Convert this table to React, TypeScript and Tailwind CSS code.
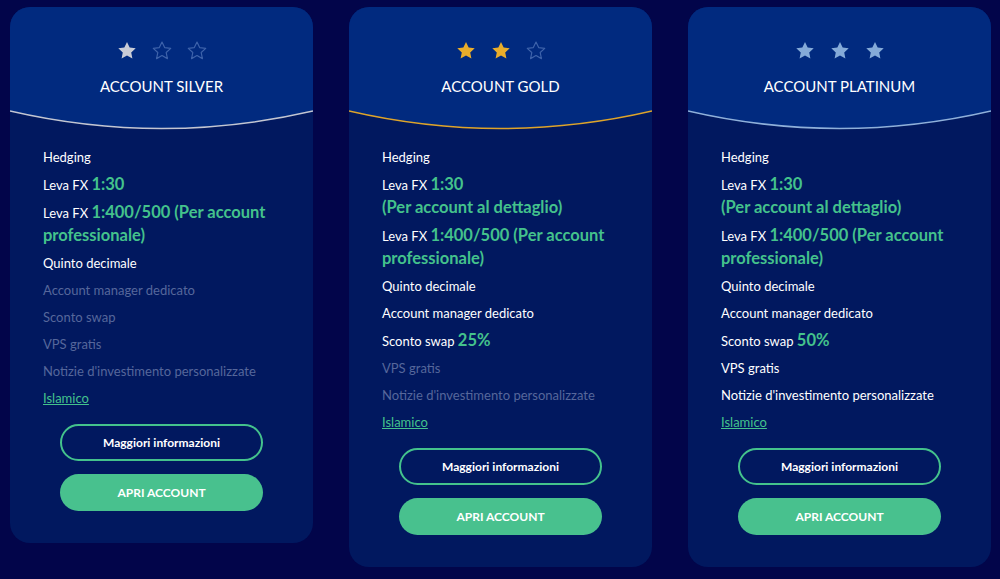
import React from "react";

type Row = { label?: string; value?: string; value2?: string; muted?: boolean; link?: boolean };

interface Plan {
  name: string;
  stars: number;
  starColor: string;
  lineColor: string;
  rows: Row[];
}

const plans: Plan[] = [
  {
    name: "ACCOUNT SILVER",
    stars: 1,
    starColor: "#c9ccd6",
    lineColor: "#c3c6d2",
    rows: [
      { label: "Hedging" },
      { label: "Leva FX", value: "1:30" },
      { label: "Leva FX", value: "1:400/500 (Per account professionale)" },
      { label: "Quinto decimale" },
      { label: "Account manager dedicato", muted: true },
      { label: "Sconto swap", muted: true },
      { label: "VPS gratis", muted: true },
      { label: "Notizie d'investimento personalizzate", muted: true },
      { label: "Islamico", link: true },
    ],
  },
  {
    name: "ACCOUNT GOLD",
    stars: 2,
    starColor: "#e9ad2b",
    lineColor: "#dea42a",
    rows: [
      { label: "Hedging" },
      { label: "Leva FX", value: "1:30", value2: "(Per account al dettaglio)" },
      { label: "Leva FX", value: "1:400/500 (Per account professionale)" },
      { label: "Quinto decimale" },
      { label: "Account manager dedicato" },
      { label: "Sconto swap", value: "25%" },
      { label: "VPS gratis", muted: true },
      { label: "Notizie d'investimento personalizzate", muted: true },
      { label: "Islamico", link: true },
    ],
  },
  {
    name: "ACCOUNT PLATINUM",
    stars: 3,
    starColor: "#84aad8",
    lineColor: "#8fb0da",
    rows: [
      { label: "Hedging" },
      { label: "Leva FX", value: "1:30", value2: "(Per account al dettaglio)" },
      { label: "Leva FX", value: "1:400/500 (Per account professionale)" },
      { label: "Quinto decimale" },
      { label: "Account manager dedicato" },
      { label: "Sconto swap", value: "50%" },
      { label: "VPS gratis" },
      { label: "Notizie d'investimento personalizzate" },
      { label: "Islamico", link: true },
    ],
  },
];

const STAR = "M12 2.2l2.9 6.1 6.6.8-4.9 4.6 1.3 6.6L12 17l-5.9 3.3 1.3-6.6-4.9-4.6 6.6-.8L12 2.2z";

function Star({ filled, color }: { filled: boolean; color: string }) {
  return (
    <svg width="22" height="22" viewBox="0 0 24 24">
      {filled ? (
        <path d={STAR} fill={color} />
      ) : (
        <path d={STAR} fill="none" stroke="#3d62aa" strokeWidth="1.3" strokeLinejoin="round" />
      )}
    </svg>
  );
}

function PlanCard({ plan }: { plan: Plan }) {
  return (
    <div className="w-[303px] shrink-0 overflow-hidden rounded-[20px] bg-[#01185f]">
      <div className="relative h-[128px]">
        <svg className="absolute inset-0" width="303" height="128" viewBox="0 0 303 128">
          <path d="M0 0 H303 V104 Q151.5 139 0 104 Z" fill="#012a7f" />
          <path d="M0 104 Q151.5 139 303 104" fill="none" stroke={plan.lineColor} strokeWidth="1.6" />
        </svg>
        <div className="relative flex flex-col items-center pt-[33px]">
          <div className="flex gap-[13px]">
            {[0, 1, 2].map((i) => (
              <Star key={i} filled={i < plan.stars} color={plan.starColor} />
            ))}
          </div>
          <div className="mt-[14px] text-[15px] leading-[20px] text-white">{plan.name}</div>
        </div>
      </div>

      <div className="px-[33px] pt-[11px] pb-[32px]">
        <ul>
          {plan.rows.map((r, i) => (
            <li
              key={i}
              className={
                "mb-[5px] text-[13px] leading-[22px] " +
                (r.link ? "text-[#44c28c] underline" : r.muted ? "text-[#56679b]" : "text-white")
              }
            >
              {r.label}
              {r.value && (
                <>
                  {" "}
                  <span className="text-[16.5px] leading-[22px] font-bold text-[#44c28c]">{r.value}</span>
                </>
              )}
              {r.value2 && (
                <>
                  <br />
                  <span className="text-[16.5px] leading-[22px] font-bold text-[#44c28c]">{r.value2}</span>
                </>
              )}
            </li>
          ))}
        </ul>

        <div className="mt-[15px] flex flex-col items-center gap-[13px]">
          <button className="h-[37px] w-[203px] rounded-full border-2 border-[#44c28c] text-[12px] font-bold text-white">
            Maggiori informazioni
          </button>
          <button className="h-[37px] w-[203px] rounded-full bg-[#48c18e] text-[12px] font-bold text-white">
            APRI ACCOUNT
          </button>
        </div>
      </div>
    </div>
  );
}

export default function App() {
  return (
    <div
      className="flex min-h-[579px] w-[1000px] items-start gap-[36px] bg-[#02054a] pl-[10px] pt-[7px]"
      style={{ fontFamily: "Lato, 'Open Sans', sans-serif" }}
    >
      {plans.map((p) => (
        <PlanCard key={p.name} plan={p} />
      ))}
    </div>
  );
}
